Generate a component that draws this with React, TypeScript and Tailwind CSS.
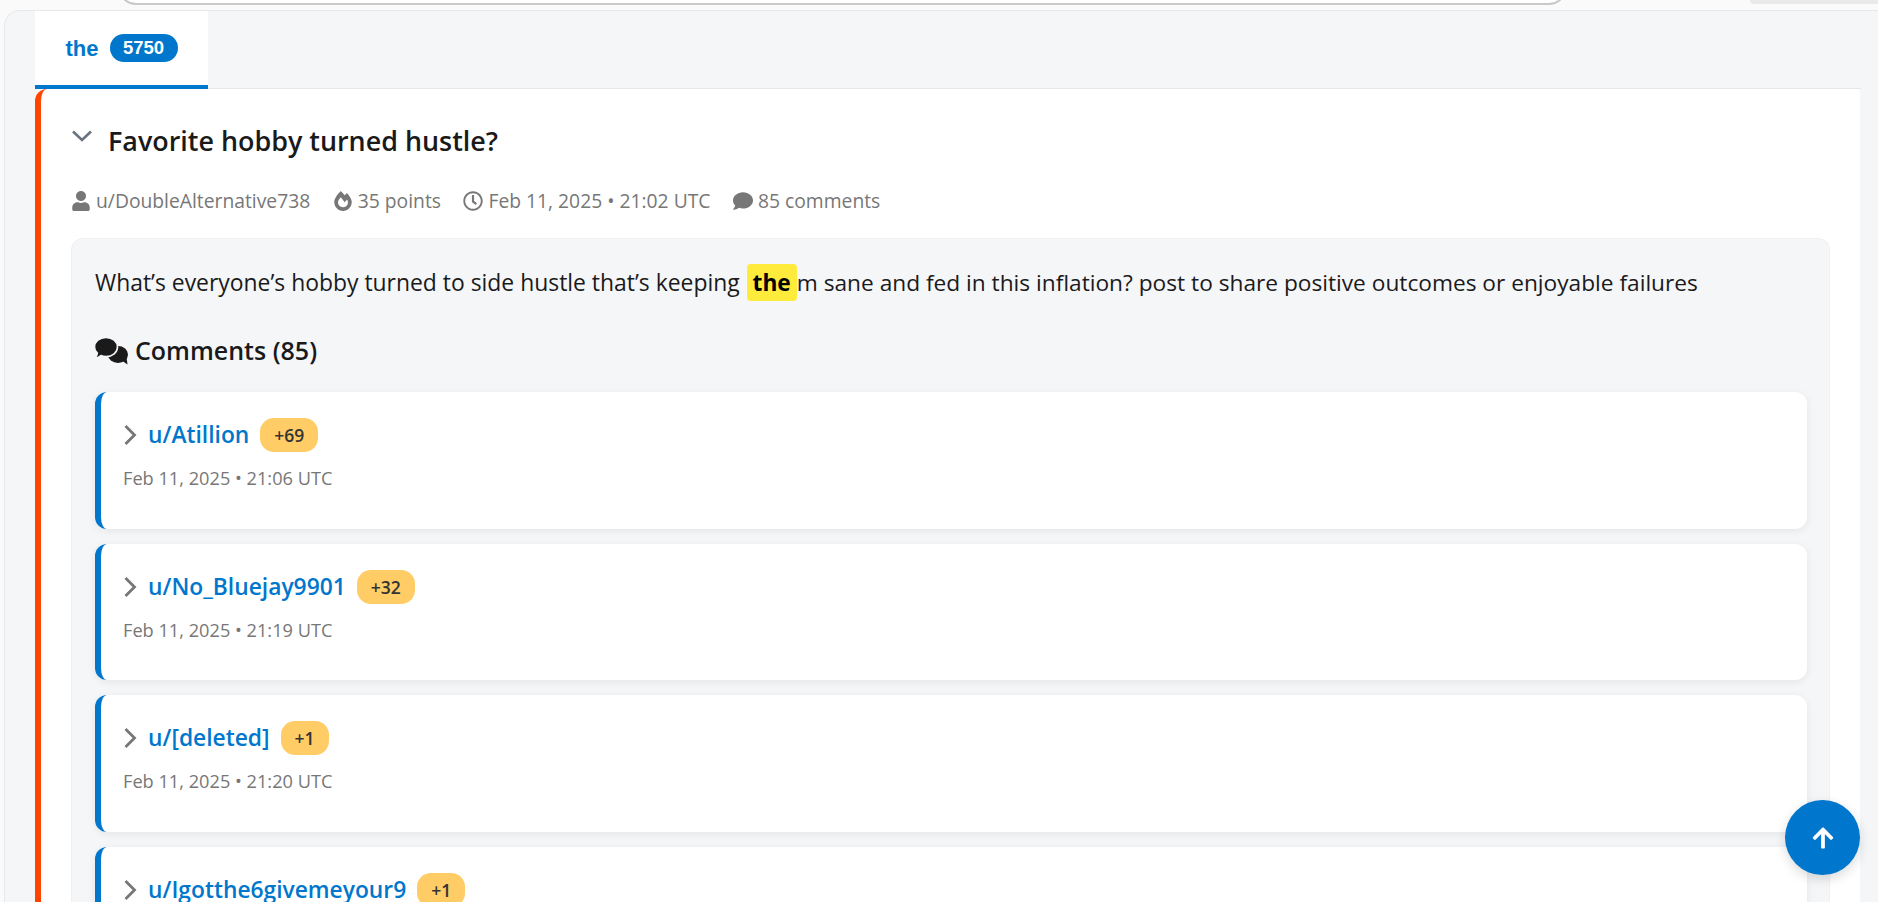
import { FaUser, FaFireAlt, FaRegClock, FaComment, FaArrowUp } from "react-icons/fa";

const comments = [
  { author: "u/Atillion", score: "+69", date: "Feb 11, 2025 • 21:06 UTC" },
  { author: "u/No_Bluejay9901", score: "+32", date: "Feb 11, 2025 • 21:19 UTC" },
  { author: "u/[deleted]", score: "+1", date: "Feb 11, 2025 • 21:20 UTC" },
  { author: "u/Igotthe6givemeyour9", score: "+1", date: "" },
];

function Chevron({ down }: { down?: boolean }) {
  return down ? (
    <svg width="22" height="14" viewBox="0 0 22 14" className="shrink-0 mt-[-10px]" fill="none">
      <path d="M2 2.5 L11 11 L20 2.5" stroke="#6b7280" strokeWidth="2.6" />
    </svg>
  ) : (
    <svg width="14" height="22" viewBox="0 0 14 22" className="shrink-0" fill="none">
      <path d="M2.5 2 L11.5 11 L2.5 20" stroke="#777" strokeWidth="2.8" />
    </svg>
  );
}

function BubblesIcon() {
  return (
    <svg width="34" height="28" viewBox="0 0 34 28" className="ml-[-1px] shrink-0">
      <ellipse cx="24" cy="17.5" rx="10" ry="8.5" fill="#1a1a1b" />
      <path d="M27 23 L33.5 27.5 L32.5 20 Z" fill="#1a1a1b" />
      <path d="M0.5 10 C0.5 4.5 5.5 0.5 12 0.5 C18.5 0.5 23.5 4.5 23.5 10 C23.5 15.5 18.5 19.5 12 19.5 C10 19.5 8.5 19.2 7 18.6 C5 20.2 3 21 0.8 21.2 C2.4 19.6 3.2 18 3.4 16.2 C1.6 14.6 0.5 12.4 0.5 10 Z" fill="#1a1a1b" stroke="#f5f6f8" strokeWidth="1.6" />
    </svg>
  );
}

function Meta({ icon, text }: { icon: React.ReactNode; text: string }) {
  return (
    <span className="flex items-center gap-[5px]">
      {icon}
      {text}
    </span>
  );
}

function CommentCard({ author, score, date }: { author: string; score: string; date: string }) {
  return (
    <div className="h-[136.67px] shrink-0 rounded-[12px] border-l-[6px] border-[#0077cc] bg-white pl-[22px] pt-[25px] shadow-[0_2px_8px_rgba(0,0,0,0.07)]">
      <div className="flex h-[36px] items-center">
        <Chevron />
        <span className="ml-[11px] text-[22.8px] font-semibold text-[#0077cc]">{author}</span>
        <span className="ml-[11px] flex h-[34px] items-center rounded-[14px] bg-[#ffcc66] px-[14px] text-[17.5px] font-semibold text-[#333]">
          {score}
        </span>
      </div>
      {date && <div className="mt-[12px] text-[18.2px] text-[#777]">{date}</div>}
    </div>
  );
}

export default function App() {
  return (
    <div className="relative h-[902px] w-[1878px] overflow-hidden bg-[#fafafa] font-['Open_Sans','Noto_Sans',sans-serif] text-[#1a1a1b]">
      <div className="flex h-[10px] items-start justify-between overflow-hidden">
        <div className="ml-[118px] mt-[-31px] h-[36px] w-[1449px] rounded-[20px] border-2 border-[#c9c9c9] bg-white" />
        <div className="h-[4px] w-[128px] rounded-bl-[12px] bg-[#e9e9e9]" />
      </div>
      <div className="ml-[4px] h-[892px] rounded-tl-[16px] border-l border-t border-[#e8e8e8] bg-[#f5f6f8] pl-[30px]">
        <div className="flex h-[78px] w-[1826px] border-b border-[#e5e7eb]">
          <div className="flex h-[78px] w-[173px] items-center justify-center gap-[11px] border-b-4 border-[#0077cc] bg-white font-['Liberation_Sans',sans-serif] text-[22px] font-bold text-[#0077cc]">
            <span>the</span>
            <span className="flex h-[28px] w-[68px] items-center justify-center rounded-full bg-[#0077cc] text-[18.5px] text-white">5750</span>
          </div>
        </div>
        <div className="w-[1825px] h-[820px] overflow-hidden rounded-tl-[12px] border-l-[6px] border-[#ff4500] bg-white pl-[30px] pr-[30px]">
          <div className="flex h-[100px] items-center pt-[4px] gap-[15px]">
            <Chevron down />
            <h1 className="text-[26.9px] font-semibold leading-none">Favorite hobby turned hustle?</h1>
          </div>
          <div className="flex items-center gap-[22.5px] text-[19.3px] leading-[24px] text-[#777]">
            <Meta icon={<FaUser size={20} />} text="u/DoubleAlternative738" />
            <Meta icon={<FaFireAlt size={20} />} text="35 points" />
            <Meta icon={<FaRegClock size={20} />} text="Feb 11, 2025 • 21:02 UTC" />
            <Meta icon={<FaComment size={20} />} text="85 comments" />
          </div>
          <div className="mt-[25px] h-[700px] rounded-t-[12px] border border-b-0 border-[#eef0f2] bg-[#f5f6f8] pl-[23px] pr-[22px] pt-[27px]">
            <p className="text-[22.7px] leading-[34px]">
              <span className="text-[22.9px]">What’s everyone’s hobby turned to side hustle that’s keeping </span>
              <mark className="ml-[1px] rounded-[4px] bg-[#ffeb3b] px-[6px] py-[3px] font-bold text-black">the</mark>
              m sane and fed in this inflation? post to share positive outcomes or enjoyable failures
            </p>
            <h2 className="mt-[33px] flex h-[36px] items-center gap-[7px] text-[25px] font-semibold">
              <BubblesIcon />
              Comments (85)
            </h2>
            <div className="mt-[23px] flex flex-col gap-[15px]">
              {comments.map((c) => (
                <CommentCard key={c.author} {...c} />
              ))}
            </div>
          </div>
        </div>
      </div>
      <button className="absolute left-[1785px] top-[800px] flex h-[75px] w-[75px] items-center justify-center rounded-full bg-[#0077cc] text-white shadow-[0_4px_12px_rgba(0,0,0,0.15)]">
        <FaArrowUp size={24} />
      </button>
    </div>
  );
}
